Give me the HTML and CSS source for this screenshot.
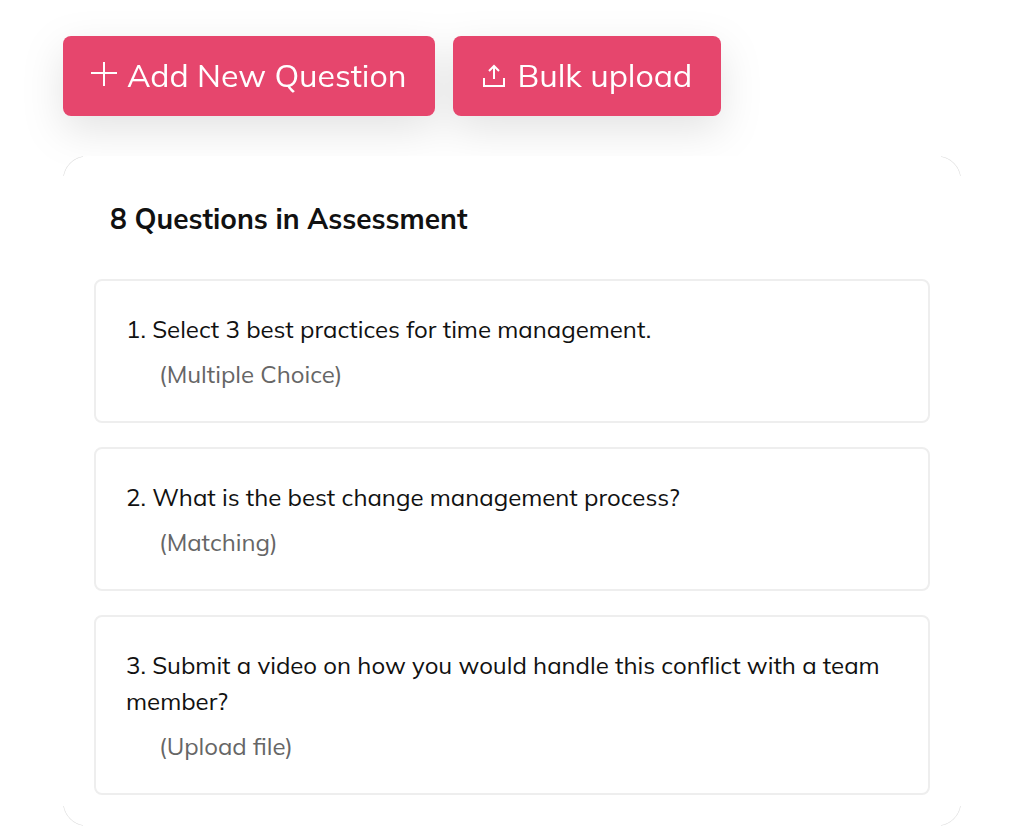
FILE: index.html
```html
<!DOCTYPE html>
<html lang="en">

<head>
    <meta charset="UTF-8">
    <meta name="viewport" content="width=device-width, initial-scale=1.0">
    <title>Assessment Questions</title>
    <link rel="stylesheet" href="styles.css">
</head>
<body>
<main class="container">
    <div class="actions">
        <button type="button" class="btn">
            <svg class="icon-plus" viewBox="0 0 26 26" aria-hidden="true">
                <path d="M13 0v24M0 11h26"/>
            </svg>
            Add New Question
        </button>
        <button type="button" class="btn btn-upload">
            <svg class="icon-upload" viewBox="0 0 24 24" aria-hidden="true">
                <path d="M2 15v8h20v-8M12 16V3.500M7 8l5-5 5 5"/>
            </svg>
            Bulk upload
        </button>
    </div>

    <section class="card">
        <h2>8 Questions in Assessment</h2>
        <ul class="questions">
            <li class="question">
                <p class="title">1. Select 3 best practices for time management.</p>
                <p class="type">(Multiple Choice)</p>
            </li>
            <li class="question">
                <p class="title">2. What is the best change management process?</p>
                <p class="type">(Matching)</p>
            </li>
            <li class="question">
                <p class="title">3. Submit a video on how you would handle this conflict with a team member?</p>
                <p class="type">(Upload file)</p>
            </li>
        </ul>
    </section>
</main>
</body>
</html>
```
FILE: styles.css
```css
* {
    box-sizing: border-box;
}

body {
    margin: 0;
    background-color: #fff;
    color: #111;
    font-family: Mulish, Muli, Lato, sans-serif;
    font-size: 24px;
    line-height: 36px;
}

.container {
    padding: 36px 63px 4px;
}

.actions {
    display: flex;
    gap: 18px;
    margin-bottom: 40px;
    filter: drop-shadow(0 14px 20px rgba(0, 0, 0, 0.11));
}

.btn {
    display: flex;
    align-items: center;
    gap: 10px;
    height: 80px;
    padding: 0 28px 2px;
    border: none;
    border-radius: 8px;
    background: #e6466d;
    color: #fff;
    font-family: inherit;
    font-size: 32px;
    white-space: nowrap;
    cursor: pointer;
}

.btn:hover {
    background: #d63c62;
}

.btn svg {
    fill: none;
    stroke: #fff;
    stroke-width: 2;
}

.btn-upload {
    gap: 12px;
    padding: 0 29px 2px;
}

.icon-plus {
    width: 26px;
    height: 26px;
}

.icon-upload {
    width: 24px;
    height: 24px;
}

.card {
    --arc: #d8d8d8;
    position: relative;
    padding: 45px 31px 31px;
    border-radius: 24px;
    /* thin arcs on the four corners */
    background:
        radial-gradient(circle at 24px 24px, transparent 23px, var(--arc) 24px) 0 0 / 20px 20px no-repeat,
        radial-gradient(circle at -4px 24px, transparent 23px, var(--arc) 24px) 100% 0 / 20px 20px no-repeat,
        radial-gradient(circle at 24px -4px, transparent 23px, var(--arc) 24px) 0 100% / 20px 20px no-repeat,
        radial-gradient(circle at -4px -4px, transparent 23px, var(--arc) 24px) 100% 100% / 20px 20px no-repeat,
        #fff;
}

.card h2 {
    margin: 0 16px 42px;
    font-size: 28px;
    font-weight: 700;
    line-height: 36px;
}

.questions {
    display: grid;
    gap: 24px;
    margin: 0;
    padding: 0;
    list-style: none;
}

.question {
    padding: 30px 30px 29px;
    border: 2px solid #eee;
    border-radius: 8px;
}

.question p {
    margin: 0;
}

.question .title {
    margin-bottom: 9px;
}

.question .type {
    padding-left: 33px;
    color: #666;
}
```
